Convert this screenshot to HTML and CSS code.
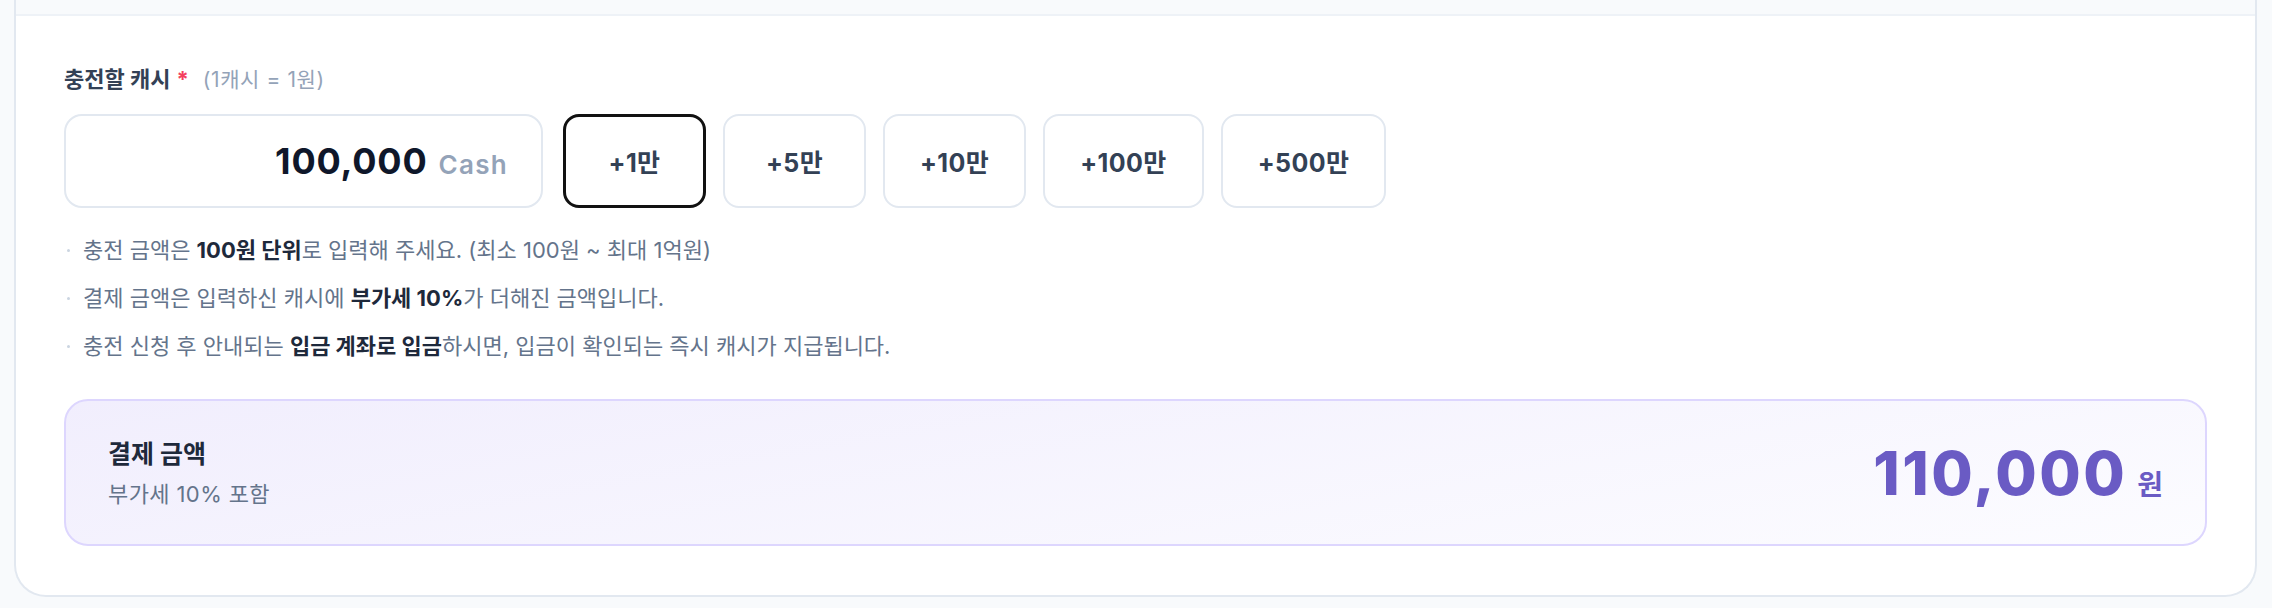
FILE: index.html
```html
<!DOCTYPE html>
<html lang="ko">
<head>
    <meta charset="UTF-8">
    <meta name="viewport" content="width=device-width, initial-scale=1.0">
    <title>캐시 충전</title>
    <link rel="stylesheet" href="styles.css">
</head>
<body>
    <div class="card">
        <div class="card-head"></div>
        <div class="card-body">
            <div class="field-label">
                <span class="label-title">충전할 캐시</span>
                <span class="required">*</span>
                <span class="label-hint">(1캐시 = 1원)</span>
            </div>

            <div class="amount-row">
                <div class="amount-input">
                    <span class="amount-value">100,000</span>
                    <span class="amount-unit">Cash</span>
                </div>
                <button class="quick-btn active">+1만</button>
                <button class="quick-btn">+5만</button>
                <button class="quick-btn">+10만</button>
                <button class="quick-btn">+100만</button>
                <button class="quick-btn">+500만</button>
            </div>

            <ul class="notes">
                <li>충전 금액은 <b>100원 단위</b>로 입력해 주세요. (최소 100원 ~ 최대 1억원)</li>
                <li>결제 금액은 입력하신 캐시에 <b>부가세 10%</b>가 더해진 금액입니다.</li>
                <li>충전 신청 후 안내되는 <b>입금 계좌로 입금</b>하시면, 입금이 확인되는 즉시 캐시가 지급됩니다.</li>
            </ul>

            <div class="summary">
                <div class="summary-text">
                    <div class="summary-title">결제 금액</div>
                    <div class="summary-sub">부가세 10% 포함</div>
                </div>
                <div class="summary-total">
                    <span class="total-value">110,000</span>
                    <span class="total-unit">원</span>
                </div>
            </div>
        </div>
    </div>
</body>
</html>
```

FILE: styles.css
```css
body {
    margin: 0;
    background-color: #f8fafc;
    font-family: Inter, "Noto Sans CJK KR", sans-serif;
    color: #334155;
}
.card {
    margin: 0 15px 0 14px;
    background-color: #fff;
    border: 2px solid #e2e8f0;
    border-top: none;
    border-radius: 0 0 32px 32px;
}
.card-head {
    height: 14px;
    background-color: #f8fafc;
    border-bottom: 2px solid #eef2f7;
}
.card-body {
    padding: 47px 48px 49px 48px;
}
.field-label {
    display: flex;
    align-items: baseline;
    line-height: 32px;
}
.label-title {
    font-size: 22px;
    font-weight: 700;
    color: #334155;
}
.required {
    font-size: 22px;
    font-weight: 700;
    color: #f43f5e;
    margin-left: 6px;
}
.label-hint {
    font-size: 21px;
    color: #94a3b8;
    margin-left: 14px;
    letter-spacing: 0.6px;
}
.amount-row {
    display: flex;
    gap: 17px;
    margin-top: 18px;
}
.amount-input {
    width: 479px;
    height: 94px;
    box-sizing: border-box;
    border: 2px solid #e2e8f0;
    border-radius: 18px;
    display: flex;
    align-items: baseline;
    justify-content: flex-end;
    padding: 0 33px;
    line-height: 90px;
    margin-right: 3px;
}
.amount-value {
    font-size: 36px;
    font-weight: 700;
    color: #0f172a;
    letter-spacing: 0.8px;
}
.amount-unit {
    font-size: 26px;
    font-weight: 600;
    color: #94a3b8;
    margin-left: 11px;
    letter-spacing: 1.3px;
}
.quick-btn {
    min-width: 143px;
    height: 94px;
    padding: 0 35px;
    box-sizing: border-box;
    background-color: #fff;
    border: 2px solid #e2e8f0;
    border-radius: 16px;
    font-family: inherit;
    font-size: 25px;
    font-weight: 700;
    color: #334155;
    letter-spacing: 0.4px;
    cursor: pointer;
}
.quick-btn.active {
    border: 3px solid #111;
}
.notes {
    list-style: none;
    margin: 18px 0 0;
    padding: 0;
}
.notes li {
    position: relative;
    padding-left: 19px;
    font-size: 22px;
    line-height: 48px;
    color: #64748b;
}
.notes li::before {
    content: "";
    position: absolute;
    left: 3px;
    top: 23px;
    width: 3px;
    height: 3px;
    border-radius: 50%;
    background-color: #cbd5e1;
}
.notes b {
    font-weight: 700;
    color: #1e293b;
}
.summary {
    margin-top: 29px;
    height: 147px;
    box-sizing: border-box;
    border: 2px solid #ddd6fe;
    border-radius: 24px;
    background: linear-gradient(170deg, #f1eefd 0%, #fcfcff 100%);
    display: flex;
    align-items: center;
    justify-content: space-between;
    padding: 0 42px;
}
.summary-title {
    font-size: 25px;
    font-weight: 700;
    color: #1e293b;
    line-height: 34px;
}
.summary-sub {
    font-size: 22px;
    color: #64748b;
    line-height: 30px;
    margin-top: 8px;
    letter-spacing: 0.4px;
}
.summary-total {
    display: flex;
    align-items: baseline;
    color: #6a5bc4;
}
.total-value {
    font-size: 60px;
    font-weight: 800;
    letter-spacing: 2.5px;
}
.total-unit {
    font-size: 28px;
    font-weight: 700;
    margin-left: 10px;
}
```
